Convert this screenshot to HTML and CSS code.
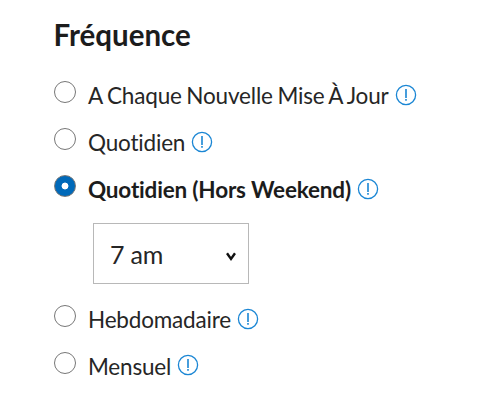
FILE: index.html
```html
<!DOCTYPE html>
<html lang="fr">
<head>
<meta charset="utf-8">
<title>Fréquence</title>
<link rel="stylesheet" href="styles.css">
</head>
<body>
<svg width="0" height="0" class="defs"><symbol id="info" viewBox="0 0 22 22"><circle cx="11" cy="11" r="9.6" fill="none" stroke="currentColor" stroke-width="1.3"/><path d="M11 5v9M11 14.9v1.8" stroke="currentColor" stroke-width="1.6"/></symbol></svg>
<form class="frequency">
<h1 class="title">Fréquence</h1>
<label class="option"><span class="radio"></span><span class="label">A Chaque Nouvelle Mise À Jour</span><svg class="info"><use href="#info"/></svg></label>
<label class="option"><span class="radio"></span><span class="label">Quotidien</span><svg class="info"><use href="#info"/></svg></label>
<label class="option selected"><span class="radio"></span><span class="label">Quotidien (Hors Weekend)</span><svg class="info"><use href="#info"/></svg></label>
<div class="select"><span class="value">7 am</span><svg class="chevron" viewBox="0 0 12 10"><path d="M2 1.3l4 5.7L10 1.3" fill="none" stroke="currentColor" stroke-width="2.4"/></svg></div>
<label class="option"><span class="radio"></span><span class="label">Hebdomadaire</span><svg class="info"><use href="#info"/></svg></label>
<label class="option"><span class="radio"></span><span class="label">Mensuel</span><svg class="info"><use href="#info"/></svg></label>
</form>
</body>
</html>
```
FILE: styles.css
```css
* { box-sizing: border-box; }
body { margin: 0; background: #fff; color: #262626; font-family: Lato, sans-serif; font-variant-ligatures: none; }
.defs { display: block; height: 0; }
.frequency { padding: 16px 0 0 54px; }
.title { margin: 0; height: 55px; font-size: 29.5px; line-height: 37px; font-weight: 700; color: #1c1c1c; text-indent: -0.5px; }
.option { display: flex; align-items: center; height: 47px; font-size: 22.5px; line-height: 27px; white-space: nowrap; }
.radio { flex: none; width: 22px; height: 22px; margin: 0 12px 5px 0; border: 1px solid #777; border-radius: 50%; }
.selected .radio { background: radial-gradient(circle, #fff 3px, #0069b9 3.8px); }
.label { flex: none; padding-top: 2px; letter-spacing: -0.18px; word-spacing: -0.9px; }
.selected .label { font-weight: 700; color: #1c1c1c; word-spacing: 0; }
.info { flex: none; width: 22px; height: 22px; margin-left: 6px; color: #1a86d4; }
.option:last-child .info { margin-bottom: 1px; }
.select { display: flex; align-items: center; justify-content: space-between; width: 156px; height: 61px; margin: 11px 0 11px 39px; padding: 0 11px 0 16px; border: 1px solid #b8b8b8; font-size: 25px; }
.value { word-spacing: -0.5px; }
.chevron { width: 12px; height: 10px; margin-top: 6px; color: #111; }
```
